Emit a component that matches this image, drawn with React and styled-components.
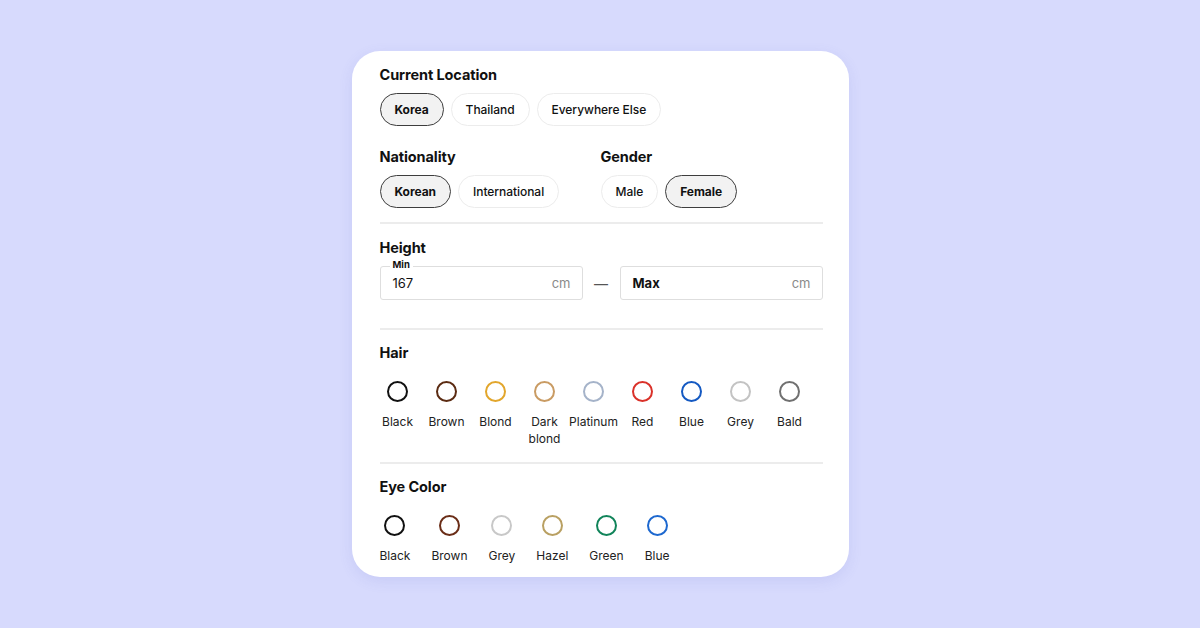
import React from "react";
import styled, { createGlobalStyle } from "styled-components";

const Global = createGlobalStyle`
  html, body { margin: 0; padding: 0; }
  body {
    background: #d7dafd;
    font-family: Inter, "Noto Sans", sans-serif;
    color: #111;
    -webkit-font-smoothing: antialiased;
  }
`;

const Page = styled.div`
  width: 1200px;
  height: 628px;
  display: flex;
  justify-content: center;
  padding-top: 51px;
  box-sizing: border-box;
`;

const Card = styled.div`
  width: 497px;
  height: 526px;
  box-sizing: border-box;
  background: #fff;
  border-radius: 28px;
  padding: 15px 26px 0 28px;
  box-shadow: 0 4px 14px rgba(90, 100, 200, 0.12);
  display: flex;
  flex-direction: column;
`;

const Section = styled.div`
  display: flex;
  flex-direction: column;
`;

const Title = styled.div`
  font-size: 14.5px;
  font-weight: 700;
  line-height: 18px;
  letter-spacing: -0.1px;
`;

const ChipRow = styled.div`
  display: flex;
  gap: 7px;
  margin-top: 9px;
`;

const Chip = styled.div`
  height: 33px;
  box-sizing: border-box;
  padding: 0 14px;
  border-radius: 17px;
  display: flex;
  align-items: center;
  justify-content: center;
  font-size: 12px;
  font-weight: ${(p) => (p.$active ? 700 : 500)};
  letter-spacing: -0.05px;
  color: #111;
  background: ${(p) => (p.$active ? "#f2f2f2" : "#fff")};
  border: 1px solid ${(p) => (p.$active ? "#3d3d3d" : "#ececec")};
`;

const Split = styled.div`
  display: grid;
  grid-template-columns: 221px 1fr;
  margin-top: 22px;
`;

const Divider = styled.div`
  height: 2px;
  background: #ececec;
  margin: ${(p) => p.$m || "14px 0 15px"};
`;

const InputRow = styled.div`
  display: flex;
  align-items: center;
  margin-top: 9px;
`;

const Field = styled.div`
  position: relative;
  flex: 1;
  height: 34px;
  box-sizing: border-box;
  border: 1.5px solid #dedede;
  border-radius: 3px;
  display: flex;
  align-items: center;
  justify-content: space-between;
  padding: 0 11px 0 12px;
`;

const FloatLabel = styled.span`
  position: absolute;
  left: 9px;
  top: -8px;
  padding: 0 3px;
  background: #fff;
  font-size: 9.5px;
  font-weight: 700;
  line-height: 12px;
`;

const Value = styled.span`
  font-size: 13px;
  font-weight: ${(p) => (p.$bold ? 700 : 400)};
  color: #111;
`;

const Unit = styled.span`
  font-size: 13px;
  color: #8a8a8a;
`;

const Dash = styled.div`
  width: 37px;
  display: flex;
  justify-content: center;
  font-size: 14px;
  color: #555;
`;

const SwatchGrid = styled.div`
  display: flex;
  gap: ${(p) => p.$gap}px;
  margin-top: 19px;
  padding-left: ${(p) => p.$indent || 0}px;
`;

const Swatch = styled.div`
  width: ${(p) => (p.$w ? `${p.$w}px` : "auto")};
  display: flex;
  flex-direction: column;
  align-items: center;
`;

const Ring = styled.div`
  width: 21px;
  height: 21px;
  box-sizing: border-box;
  border-radius: 50%;
  border: 2px solid ${(p) => p.$c};
`;

const SwatchLabel = styled.span`
  margin-top: 11px;
  font-size: 12px;
  line-height: 17px;
  text-align: center;
  color: #222;
`;

const hair = [
  ["Black", "#111111"],
  ["Brown", "#5b2b12"],
  ["Blond", "#e2a62c"],
  ["Dark blond", "#c99b63"],
  ["Platinum", "#a5b3c9"],
  ["Red", "#da3129"],
  ["Blue", "#1459c2"],
  ["Grey", "#c3c3c3"],
  ["Bald", "#707070"],
];

const eyes = [
  ["Black", "#111111"],
  ["Brown", "#6a2d17"],
  ["Grey", "#c8c8c8"],
  ["Hazel", "#b9a062"],
  ["Green", "#11845a"],
  ["Blue", "#1d68cf"],
];

export default function App() {
  return (
    <>
      <Global />
      <Page>
        <Card>
          <Section>
            <Title>Current Location</Title>
            <ChipRow>
              <Chip $active>Korea</Chip>
              <Chip>Thailand</Chip>
              <Chip>Everywhere Else</Chip>
            </ChipRow>
          </Section>
          <Split>
            <Section>
              <Title>Nationality</Title>
              <ChipRow>
                <Chip $active>Korean</Chip>
                <Chip>International</Chip>
              </ChipRow>
            </Section>
            <Section>
              <Title>Gender</Title>
              <ChipRow>
                <Chip>Male</Chip>
                <Chip $active>Female</Chip>
              </ChipRow>
            </Section>
          </Split>
          <Divider />
          <Section>
            <Title>Height</Title>
            <InputRow>
              <Field>
                <FloatLabel>Min</FloatLabel>
                <Value>167</Value>
                <Unit>cm</Unit>
              </Field>
              <Dash>—</Dash>
              <Field>
                <Value $bold>Max</Value>
                <Unit>cm</Unit>
              </Field>
            </InputRow>
          </Section>
          <Divider $m="28px 0 14px" />
          <Section>
            <Title>Hair</Title>
            <SwatchGrid $gap={15} $indent={1}>
              {hair.map(([n, c]) => (
                <Swatch key={n} $w={34}>
                  <Ring $c={c} />
                  <SwatchLabel>{n}</SwatchLabel>
                </Swatch>
              ))}
            </SwatchGrid>
          </Section>
          <Divider $m="15px 0 14px" />
          <Section>
            <Title>Eye Color</Title>
            <SwatchGrid $gap={21}>
              {eyes.map(([n, c]) => (
                <Swatch key={n}>
                  <Ring $c={c} />
                  <SwatchLabel>{n}</SwatchLabel>
                </Swatch>
              ))}
            </SwatchGrid>
          </Section>
        </Card>
      </Page>
    </>
  );
}
